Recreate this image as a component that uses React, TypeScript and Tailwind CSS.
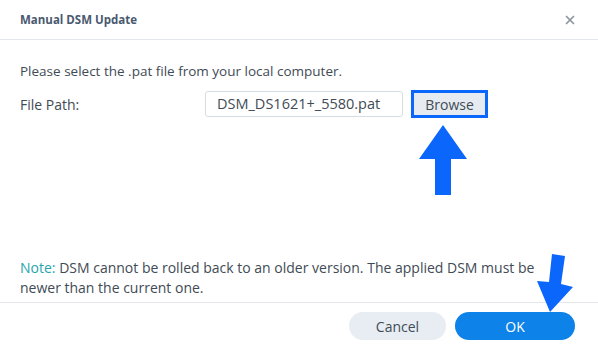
import { X } from 'lucide-react';

const ArrowOverlay = () => (
  <svg className="pointer-events-none absolute left-0 top-0" width={598} height={349} aria-hidden="true">
    {/* arrow pointing up at Browse */}
    <polygon points="443,125 467,159 451,159 451,195 435,195 435,159 419,159" fill="#0b66fb" />
    {/* arrow pointing down at OK, slightly tilted */}
    <polygon points="552,254 565,256 561,284 573,287 550,312 537,281 549,282" fill="#0b66fb" />
  </svg>
);

export default function App() {
  return (
    <div
      className="relative flex h-[349px] w-[598px] flex-col overflow-hidden bg-white text-[14px] text-[#414b55]"
      style={{ fontFamily: '"Open Sans", "Liberation Sans", Arial, sans-serif' }}
    >
      {/* Header */}
      <div className="flex h-[40px] shrink-0 items-center justify-between border-b border-[#e3e7ec] pl-5 pr-[21px]">
        <h1 className="text-[11.5px] font-bold text-[#495a70]">Manual DSM Update</h1>
        <X className="h-[14px] w-[14px] text-[#8e97a3]" strokeWidth={3} />
      </div>

      {/* Body */}
      <div className="flex flex-1 flex-col px-5 pt-[22px]">
        <p className="text-[13.5px] leading-[18px]">Please select the .pat file from your local computer.</p>

        <div className="mt-[10px] flex h-[28px] items-center">
          <span className="w-[185px] shrink-0">File Path:</span>
          <div className="flex h-[26px] w-[198px] items-center rounded-[3px] border border-[#d6dce3] px-[11px] text-[14.5px]">
            DSM_DS1621+_5580.pat
          </div>
          <button
            type="button"
            className="ml-2 flex h-[28px] w-[77px] items-center justify-center border-[3px] border-[#0b66fb] bg-[#e6ebf2] text-[#414b55]"
          >
            Browse
          </button>
        </div>

        <div className="flex-1" />

        <p className="max-w-[535px] pb-1 leading-[20px]">
          <span className="text-[#25a5ae]">Note:</span> DSM cannot be rolled back to an older version. The applied DSM must be
          newer than the current one.
        </p>
      </div>

      {/* Footer */}
      <div className="flex h-[47px] shrink-0 items-start justify-end gap-[9px] border-t border-[#e3e7ec] pr-[23px] pt-[9px]">
        <button type="button" className="h-[28px] w-[97px] rounded-full bg-[#e8edf3] text-[#414b55]">
          Cancel
        </button>
        <button type="button" className="h-[28px] w-[120px] rounded-full bg-[#0d82e8] text-white">
          OK
        </button>
      </div>

      <ArrowOverlay />
    </div>
  );
}
